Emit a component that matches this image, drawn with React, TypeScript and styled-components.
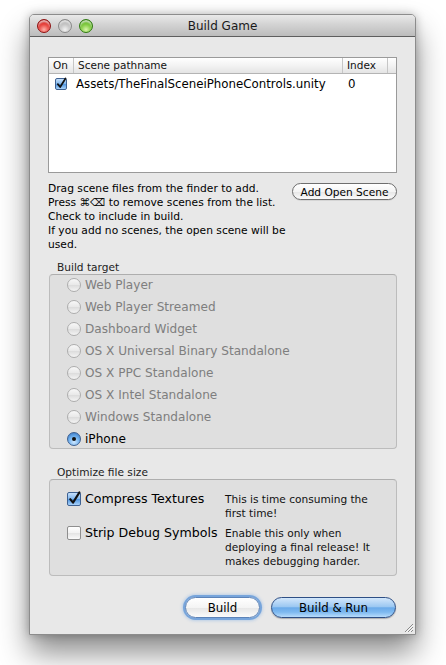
import React from 'react';
import styled, { createGlobalStyle, css } from 'styled-components';

const GlobalStyle = createGlobalStyle`
  html, body {
    margin: 0;
    padding: 0;
    background: #ffffff;
  }
  body {
    font-family: "DejaVu Sans", "Liberation Sans", sans-serif;
    color: #000;
  }
`;

const Page = styled.div`
  padding: 14px 0 30px 29px;
`;

const Window = styled.div`
  position: relative;
  width: 387px;
  height: 621px;
  box-sizing: border-box;
  background: #e8e8e8;
  border: 1px solid #8c8c8c;
  border-radius: 5px 5px 0 0;
  box-shadow: 0 18px 30px rgba(0, 0, 0, 0.45), 0 0 10px rgba(0, 0, 0, 0.25);
  display: flex;
  flex-direction: column;
`;

const TitleBar = styled.div`
  position: relative;
  height: 21px;
  border-radius: 4px 4px 0 0;
  background: linear-gradient(#e9e9e9, #d3d3d3 45%, #bcbcbc);
  border-bottom: 1px solid #5e5e5e;
  display: flex;
  align-items: center;
  justify-content: center;
  font-size: 12px;
  color: #1a1a1a;
`;

const Lights = styled.div`
  position: absolute;
  left: 7px;
  top: 4px;
  display: flex;
  gap: 7px;
`;

const lightColors = {
  red: ['#ffb0a8', '#e2302a', '#8e1010'],
  gray: ['#f2f2f2', '#bdbdbd', '#8a8a8a'],
  green: ['#d9f7a9', '#6fc12c', '#2f7a10'],
};

const Light = styled.span<{ $c: keyof typeof lightColors }>`
  width: 14px;
  height: 14px;
  border-radius: 50%;
  box-sizing: border-box;
  border: 1px solid ${p => lightColors[p.$c][2]};
  background: radial-gradient(circle at 50% 80%, ${p => lightColors[p.$c][0]} 0%, ${p => lightColors[p.$c][1]} 55%, ${p => lightColors[p.$c][2]} 100%);
  box-shadow: inset 0 2px 2px rgba(255, 255, 255, 0.7);
`;

const Content = styled.div`
  flex: 1;
  padding: 20px 18px 0 18px;
  display: flex;
  flex-direction: column;
`;

const ListBox = styled.div`
  height: 116px;
  box-sizing: border-box;
  background: #fff;
  border: 1px solid #9a9a9a;
`;

const HeaderRow = styled.div`
  display: grid;
  grid-template-columns: 25px 269px 45px 1fr;
  height: 16px;
  box-sizing: border-box;
  background: linear-gradient(#ffffff, #f3f3f3 50%, #e4e4e4);
  border-bottom: 1px solid #b4b4b4;
`;

const HeaderCell = styled.div`
  font-size: 10.5px;
  line-height: 15px;
  padding-left: 4px;
  border-right: 1px solid #c6c6c6;
  color: #111;
  &:last-child {
    border-right: none;
  }
`;

const SceneRow = styled.div`
  display: grid;
  grid-template-columns: 25px 269px 45px 1fr;
  height: 19px;
  align-items: center;
`;

const SceneCell = styled.div<{ $pad?: number }>`
  font-size: 11.8px;
  padding-left: ${p => p.$pad ?? 0}px;
  display: flex;
  align-items: center;
`;

const InfoRow = styled.div`
  margin-top: 9px;
  display: flex;
  justify-content: space-between;
  align-items: flex-start;
`;

const InfoText = styled.p`
  margin: 0;
  font-size: 10.7px;
  line-height: 14px;
`;

const SmallButton = styled.button`
  margin-top: 1px;
  width: 105px;
  height: 17px;
  padding: 0;
  border-radius: 9px;
  border: 1px solid #6e6e6e;
  background: linear-gradient(#ffffff, #f4f4f4 50%, #e6e6e6 52%, #fbfbfb);
  font-family: inherit;
  font-size: 10.6px;
  color: #000;
  box-shadow: 0 1px 0 rgba(0, 0, 0, 0.08);
`;

const GroupLabel = styled.div<{ $top: number }>`
  margin-top: ${p => p.$top}px;
  padding-left: 9px;
  font-size: 10.6px;
  line-height: 14px;
  color: #222;
`;

const GroupBox = styled.div`
  margin-left: 1px;
  box-sizing: border-box;
  background: #dfdfdf;
  border: 1px solid #bcbcbc;
  border-top-color: #aeaeae;
  border-radius: 4px;
`;

const RadioList = styled.div`
  display: flex;
  flex-direction: column;
  gap: 6px;
  padding: 2px 0 0 17px;
  height: 173px;
  box-sizing: border-box;
`;

const RadioRow = styled.div<{ $disabled?: boolean }>`
  display: flex;
  align-items: center;
  gap: 4px;
  height: 16px;
  font-size: 12.1px;
  color: ${p => (p.$disabled ? '#7e7e7e' : '#000')};
`;

const Radio = styled.span<{ $checked?: boolean }>`
  position: relative;
  width: 14px;
  height: 14px;
  border-radius: 50%;
  box-sizing: border-box;
  ${p =>
    p.$checked
      ? css`
          border: 1px solid #3c5f91;
          background: radial-gradient(circle at 50% 75%, #cfe8ff 0%, #6fb0ee 50%, #2f6fbd 100%);
          &::after {
            content: '';
            position: absolute;
            left: 4px;
            top: 4px;
            width: 4px;
            height: 4px;
            border-radius: 50%;
            background: #111;
          }
        `
      : css`
          border: 1px solid #adadad;
          background: linear-gradient(#f8f8f8, #e8e8e8 50%, #dcdcdc 52%, #f4f4f4);
        `}
`;

const OptionGrid = styled.div`
  display: grid;
  grid-template-columns: 158px 1fr;
  row-gap: 6px;
  padding: 12px 0 7px 17px;
`;

const CheckLabel = styled.label`
  display: flex;
  align-items: center;
  gap: 4px;
  height: 14px;
  font-size: 12.6px;
  line-height: 14px;
  color: #000;
`;

const Description = styled.div`
  font-size: 10.6px;
  line-height: 14px;
  color: #111;
`;

const Box = styled.span<{ $checked?: boolean; $size: number }>`
  display: inline-flex;
  align-items: center;
  justify-content: center;
  width: ${p => p.$size}px;
  height: ${p => p.$size}px;
  box-sizing: border-box;
  border-radius: 2px;
  flex: none;
  ${p =>
    p.$checked
      ? css`
          border: 1px solid #3e6192;
          background: linear-gradient(#c6e0fb, #7fb6ee 50%, #4f95e0 52%, #a8d2fa);
        `
      : css`
          border: 1px solid #8e8e8e;
          background: linear-gradient(#ffffff, #f2f2f2 50%, #e4e4e4 52%, #fafafa);
        `}
  svg {
    overflow: visible;
  }
`;

const ButtonBar = styled.div`
  margin-top: 21px;
  display: flex;
  justify-content: flex-end;
  gap: 11px;
  padding-right: 1px;
`;

const AquaButton = styled.button<{ $primary?: boolean; $w: number }>`
  width: ${p => p.$w}px;
  height: 21px;
  padding: 0;
  border-radius: 11px;
  font-family: inherit;
  font-size: 11.8px;
  color: #000;
  ${p =>
    p.$primary
      ? css`
          border: 1px solid #2e4f85;
          background: linear-gradient(#d3e7fb, #9cc8f2 45%, #6aaaea 52%, #7fbaf0 75%, #b8dcfb);
          box-shadow: 0 1px 1px rgba(0, 0, 0, 0.25);
        `
      : css`
          border: 1px solid #5c83b8;
          background: linear-gradient(#ffffff, #f4f4f4 50%, #e6e6e6 52%, #fbfbfb);
          box-shadow: 0 0 0 2px rgba(95, 150, 215, 0.75), 0 0 3px 3px rgba(120, 170, 230, 0.4);
        `}
`;

const Grip = styled.svg`
  position: absolute;
  right: 1px;
  bottom: 1px;
`;

const Check = ({ checked, size }: { checked?: boolean; size: number }) => (
  <Box $checked={checked} $size={size}>
    {checked && (
      <svg width={size - 2} height={size - 2} viewBox="0 0 12 12">
        <path d="M2.2 6.2 L5 9.6 L11.4 -0.6" fill="none" stroke="#111" strokeWidth="2.1" strokeLinecap="round" strokeLinejoin="round" />
      </svg>
    )}
  </Box>
);

const targets = [
  'Web Player',
  'Web Player Streamed',
  'Dashboard Widget',
  'OS X Universal Binary Standalone',
  'OS X PPC Standalone',
  'OS X Intel Standalone',
  'Windows Standalone',
  'iPhone',
];

export default function App() {
  return (
    <>
      <GlobalStyle />
      <Page>
        <Window>
          <TitleBar>
            <Lights>
              <Light $c="red" />
              <Light $c="gray" />
              <Light $c="green" />
            </Lights>
            Build Game
          </TitleBar>
          <Content>
            <ListBox>
              <HeaderRow>
                <HeaderCell>On</HeaderCell>
                <HeaderCell>Scene pathname</HeaderCell>
                <HeaderCell>Index</HeaderCell>
                <HeaderCell />
              </HeaderRow>
              <SceneRow>
                <SceneCell $pad={6}>
                  <Check checked size={12} />
                </SceneCell>
                <SceneCell $pad={2}>Assets/TheFinalSceneiPhoneControls.unity</SceneCell>
                <SceneCell $pad={5}>0</SceneCell>
                <SceneCell />
              </SceneRow>
            </ListBox>

            <InfoRow>
              <InfoText>
                Drag scene files from the finder to add.
                <br />
                Press ⌘⌫ to remove scenes from the list.
                <br />
                Check to include in build.
                <br />
                If you add no scenes, the open scene will be
                <br />
                used.
              </InfoText>
              <SmallButton>Add Open Scene</SmallButton>
            </InfoRow>

            <GroupLabel $top={8}>Build target</GroupLabel>
            <GroupBox>
              <RadioList>
                {targets.map(t => (
                  <RadioRow key={t} $disabled={t !== 'iPhone'}>
                    <Radio $checked={t === 'iPhone'} />
                    {t}
                  </RadioRow>
                ))}
              </RadioList>
            </GroupBox>

            <GroupLabel $top={16}>Optimize file size</GroupLabel>
            <GroupBox>
              <OptionGrid>
                <CheckLabel>
                  <Check checked size={14} />
                  Compress Textures
                </CheckLabel>
                <Description>
                  This is time consuming the
                  <br />
                  first time!
                </Description>
                <CheckLabel>
                  <Check size={14} />
                  Strip Debug Symbols
                </CheckLabel>
                <Description>
                  Enable this only when
                  <br />
                  deploying a final release! It
                  <br />
                  makes debugging harder.
                </Description>
              </OptionGrid>
            </GroupBox>

            <ButtonBar>
              <AquaButton $w={75}>Build</AquaButton>
              <AquaButton $primary $w={125}>Build &amp; Run</AquaButton>
            </ButtonBar>
          </Content>
          <Grip width="11" height="11" viewBox="0 0 11 11">
            <path d="M10 2 L2 10 M10 5 L5 10 M10 8 L8 10" stroke="#8a8a8a" strokeWidth="1" />
            <path d="M10.5 3 L3 10.5 M10.5 6 L6 10.5" stroke="#fff" strokeWidth="0.8" />
          </Grip>
        </Window>
      </Page>
    </>
  );
}
